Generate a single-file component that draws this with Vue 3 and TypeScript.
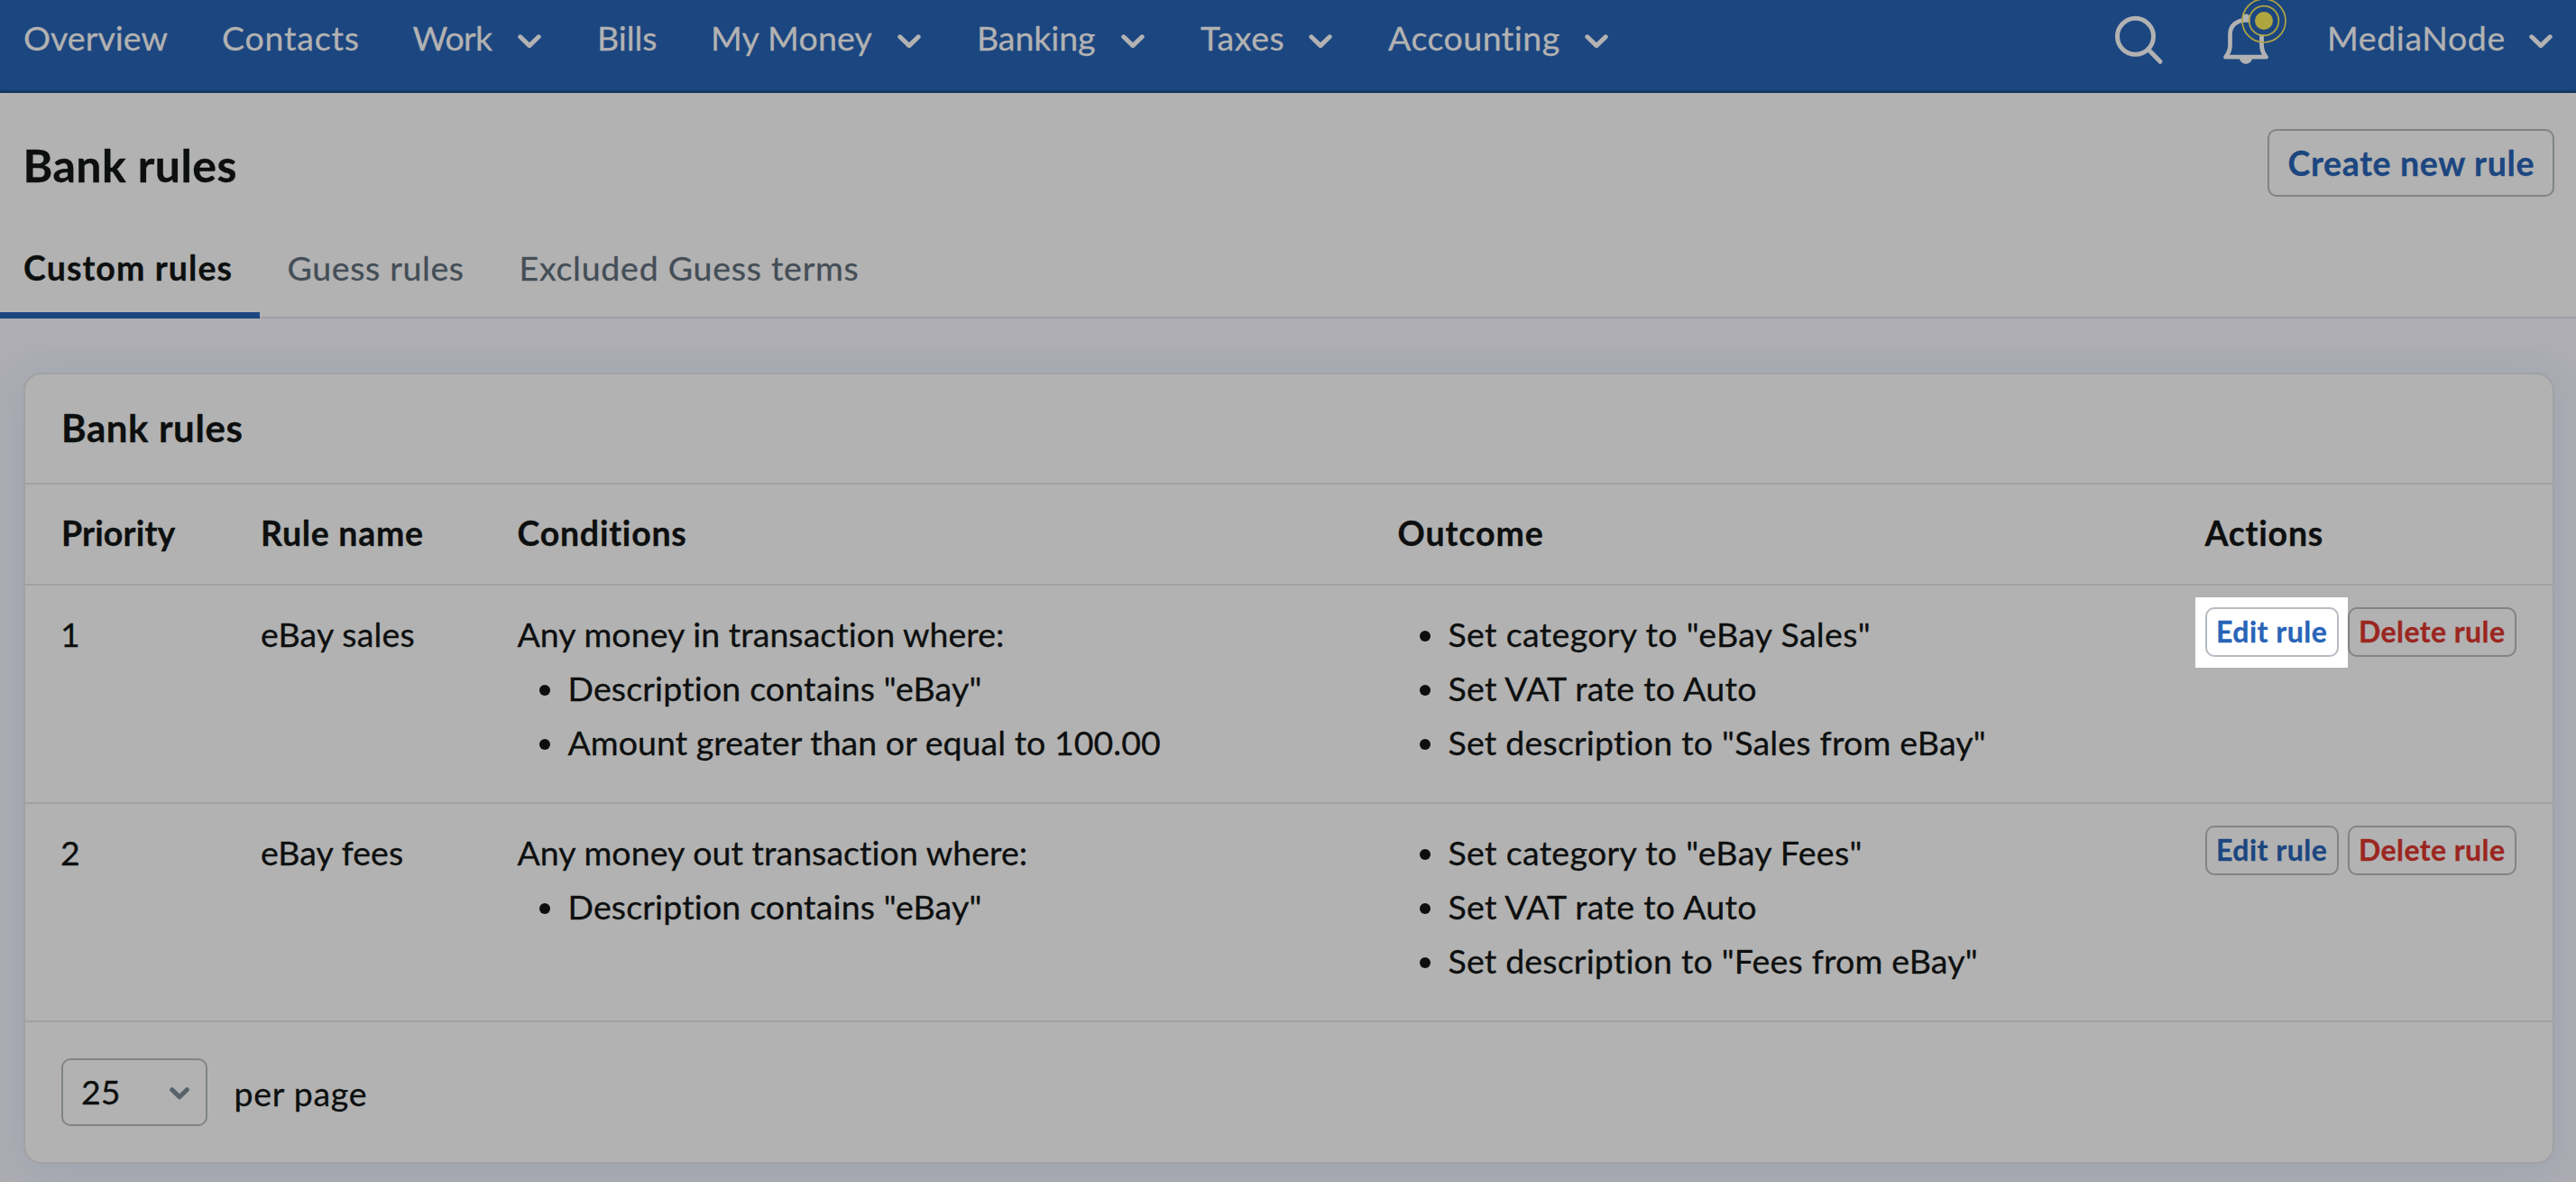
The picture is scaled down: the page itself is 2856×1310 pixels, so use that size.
<script setup lang="ts">
interface Label { text: string; ls?: number }
interface NavItem extends Label { menu?: boolean }
interface Rule {
  priority: number
  name: Label
  intro: Label
  conditions: Label[]
  outcomes: Label[]
  highlighted?: boolean
}

const nav: NavItem[] = [
  { text: 'Overview', ls: 0.05 },
  { text: 'Contacts', ls: 0.8 },
  { text: 'Work', ls: -0.7, menu: true },
  { text: 'Bills', ls: -0.1 },
  { text: 'My Money', ls: 0.2, menu: true },
  { text: 'Banking', ls: -0.08, menu: true },
  { text: 'Taxes', ls: 0.6, menu: true },
  { text: 'Accounting', ls: 0.5, menu: true },
]

const tabs: Label[] = [
  { text: 'Custom rules', ls: 1.1 },
  { text: 'Guess rules', ls: 0.63 },
  { text: 'Excluded Guess terms', ls: 0.74 },
]

const columns: Label[] = [
  { text: 'Priority', ls: 0.15 },
  { text: 'Rule name', ls: 0.68 },
  { text: 'Conditions', ls: 0.75 },
  { text: 'Outcome', ls: 0.93 },
  { text: 'Actions', ls: 0.75 },
]

const rules: Rule[] = [
  {
    priority: 1,
    name: { text: 'eBay sales', ls: 0.17 },
    intro: { text: 'Any money in transaction where:', ls: 0.05 },
    conditions: [
      { text: 'Description contains "eBay"', ls: 0.15 },
      { text: 'Amount greater than or equal to 100.00', ls: 0.03 },
    ],
    outcomes: [
      { text: 'Set category to "eBay Sales"', ls: 0.35 },
      { text: 'Set VAT rate to Auto', ls: 0.3 },
      { text: 'Set description to "Sales from eBay"', ls: 0.2 },
    ],
    highlighted: true,
  },
  {
    priority: 2,
    name: { text: 'eBay fees', ls: 0.05 },
    intro: { text: 'Any money out transaction where:', ls: 0.05 },
    conditions: [{ text: 'Description contains "eBay"', ls: 0.15 }],
    outcomes: [
      { text: 'Set category to "eBay Fees"', ls: 0.32 },
      { text: 'Set VAT rate to Auto', ls: 0.3 },
      { text: 'Set description to "Fees from eBay"', ls: 0.18 },
    ],
  },
]

const track = (l: Label) => ({ letterSpacing: `${l.ls ?? 0}px` })
</script>

<template>
  <div class="page">
    <header class="topbar">
      <nav class="menu">
        <a v-for="item in nav" :key="item.text" class="menu-item">
          <span :style="track(item)">{{ item.text }}</span>
          <svg v-if="item.menu" class="chevron" width="26" height="16" viewBox="0 0 26 16">
            <path d="M2.8 2.8 L13 12.6 L23.2 2.8" />
          </svg>
        </a>
      </nav>
      <div class="tools">
        <svg class="search" width="56" height="83" viewBox="0 0 56 83">
          <circle cx="24.5" cy="40.3" r="20" />
          <path d="M38.5 54.5 L52 68.3" />
        </svg>
        <svg class="bell" width="76" height="83" viewBox="0 0 76 83">
          <path class="bell-body" d="M28 22.3 C17 22.3 10.5 29 10.5 38 L10.5 50 C10.5 56 9 59 5.5 63.2 H50.5 C47 59 45.5 56 45.5 50 L45.5 38 C45.5 29 39 22.3 28 22.3 Z" />
          <path class="bell-fill" d="M24 24 V18.5 Q24 15.4 28 15.4 Q32 15.4 32 18.5 V24 Z M20.7 64 H35.3 C34.5 68.5 31.5 70.8 28 70.8 C24.5 70.8 21.5 68.5 20.7 64 Z" />
          <circle class="mask" cx="48" cy="23" r="15.5" />
          <circle class="ring" cx="48" cy="23" r="16.4" />
          <circle class="ring" cx="48" cy="23" r="24" />
          <circle class="dot" cx="48" cy="23" r="10" />
        </svg>
        <a class="account">
          <span>MediaNode</span>
          <svg class="chevron" width="26" height="16" viewBox="0 0 26 16">
            <path d="M2.8 2.8 L13 12.6 L23.2 2.8" />
          </svg>
        </a>
      </div>
    </header>

    <section class="heading">
      <h1>Bank rules</h1>
      <button class="create">Create new rule</button>
    </section>

    <div class="tabs">
      <a v-for="(tab, i) in tabs" :key="tab.text" class="tab" :class="{ active: i === 0 }">
        <span :style="track(tab)">{{ tab.text }}</span>
      </a>
    </div>

    <main class="body">
      <section class="card">
        <h2>Bank rules</h2>
        <div class="grid head">
          <div v-for="col in columns" :key="col.text" :style="track(col)">{{ col.text }}</div>
        </div>
        <div v-for="rule in rules" :key="rule.priority" class="grid row">
          <div class="priority">{{ rule.priority }}</div>
          <div :style="track(rule.name)">{{ rule.name.text }}</div>
          <div>
            <p :style="track(rule.intro)">{{ rule.intro.text }}</p>
            <ul>
              <li v-for="c in rule.conditions" :key="c.text" :style="track(c)">{{ c.text }}</li>
            </ul>
          </div>
          <ul>
            <li v-for="o in rule.outcomes" :key="o.text" :style="track(o)">{{ o.text }}</li>
          </ul>
          <div class="actions">
            <button class="small edit" :class="{ highlighted: rule.highlighted }">Edit rule</button>
            <button class="small delete">Delete rule</button>
          </div>
        </div>
        <footer class="pager">
          <div class="select">
            <span>25</span>
            <svg class="chevron" width="22" height="14" viewBox="0 0 22 14">
              <path d="M2.7 2.7 L11 10.8 L19.3 2.7" />
            </svg>
          </div>
          <span class="per-page">per page</span>
        </footer>
      </section>
    </main>
  </div>
</template>

<style>
body {
  margin: 0;
  background: #adadb3;
}
</style>

<style scoped>
.page {
  width: 2856px;
  height: 1310px;
  display: flex;
  flex-direction: column;
  overflow: hidden;
  box-sizing: border-box;
  font-family: Lato, "Liberation Sans", sans-serif;
  font-size: 37.5px;
  line-height: 60px;
  color: #0d0f0f;
  white-space: nowrap;
  -webkit-text-stroke: 0.3px currentColor;
}
.page * {
  box-sizing: border-box;
}
h1, h2, p, ul {
  margin: 0;
  padding: 0;
}
.topbar {
  flex: none;
  height: 103px;
  display: flex;
  justify-content: space-between;
  background: #1c4680;
  box-shadow: inset 0 -3px 1px -0.5px #14335f;
  color: #b2b2b2;
  line-height: 84px;
}
.menu {
  display: grid;
  grid-template-columns: 220px 211.5px 204.5px 126px 295px 248px 208px 306.5px;
  padding-left: 26px;
}
.menu-item {
  display: flex;
  justify-content: space-between;
  padding-right: 62.5px;
}
.chevron {
  flex: none;
  margin-top: 37.5px;
  fill: none;
  stroke: #b2b2b2;
  stroke-width: 5;
  stroke-linecap: round;
  stroke-linejoin: round;
}
.tools {
  display: flex;
  padding-right: 26px;
}
.search {
  fill: none;
  stroke: #b2b2b2;
  stroke-width: 5;
  stroke-linecap: round;
  margin-right: 63px;
}
.bell {
  margin-right: 42px;
}
.bell-body {
  fill: none;
  stroke: #b2b2b2;
  stroke-width: 4.8;
  stroke-linejoin: round;
}
.bell-fill {
  fill: #b2b2b2;
}
.mask {
  fill: #1c4680;
}
.ring {
  fill: none;
  stroke: #b0a640;
  stroke-width: 1.7;
}
.dot {
  fill: #b0a640;
}
.account {
  display: flex;
  justify-content: space-between;
  width: 250px;
  letter-spacing: 0.6px;
}
.heading {
  flex: none;
  height: 140px;
  display: flex;
  justify-content: space-between;
  align-items: flex-start;
  padding: 40px 24px 0 25.5px;
  background: #b2b2b2;
}
h1 {
  font-size: 50px;
  font-weight: 700;
  line-height: 80px;
  letter-spacing: 0.45px;
}
button {
  font-family: inherit;
  font-weight: 700;
  background: transparent;
  border: 2px solid #7f8487;
  border-radius: 10px;
  color: #1c4680;
  text-align: left;
  white-space: nowrap;
}
.create {
  width: 318px;
  height: 75px;
  padding: 0 0 1px 20.5px;
  font-size: 37.5px;
  letter-spacing: 0.66px;
}
.tabs {
  flex: none;
  height: 110px;
  display: grid;
  grid-template-columns: 288px 257px auto;
  background: #b2b2b2;
  border-bottom: 2px solid #a0a1a5;
  line-height: 108px;
  color: #444e57;
}
.tab {
  height: 110px;
  padding-left: 30.5px;
}
.tab.active {
  padding-left: 26px;
  font-weight: 700;
  color: #0d0f0f;
  border-bottom: 7px solid #1c4680;
}
.body {
  flex: 1;
  padding: 60px 24px 0 26px;
  background: #adadb3;
}
.card {
  height: 877px;
  background: #b2b2b2;
  border: 2px solid #a1a1a6;
  border-radius: 20px;
  box-shadow: 0 8px 40px rgba(90, 125, 160, 0.2);
}
h2 {
  height: 122px;
  padding-left: 40px;
  border-bottom: 2px solid #a0a0a5;
  font-size: 42px;
  font-weight: 700;
  line-height: 119.5px;
  letter-spacing: 0.58px;
}
.grid {
  display: grid;
  grid-template-columns: 221px 284.5px 976px 895px auto;
  padding: 24px 0 0 40px;
  border-bottom: 2px solid #a0a0a5;
}
.head {
  height: 112px;
  font-weight: 700;
}
.row {
  height: 242px;
}
.priority {
  margin-left: -1px;
}
ul {
  list-style: none;
  padding-left: 56px;
}
li {
  display: flex;
  align-items: center;
}
li::before {
  content: "";
  width: 12px;
  height: 12px;
  margin-left: -31.5px;
  margin-right: 19.5px;
  border-radius: 50%;
  background: #0d0f0f;
  transform: translateY(2px);
}
.actions {
  display: flex;
  gap: 10px;
}
.small {
  height: 55px;
  padding: 0 0 2px 10.5px;
  font-size: 32px;
}
.edit {
  position: relative;
  width: 148px;
  letter-spacing: 0.5px;
}
.edit.highlighted {
  z-index: 0;
  color: #2864b8;
  border-color: #b5bbc1;
}
.edit.highlighted::before {
  content: "";
  position: absolute;
  z-index: -1;
  inset: -13px -12px -14px -13px;
  background: #fff;
}
.edit.highlighted::after {
  content: "";
  position: absolute;
  inset: -2px;
  border: 2px solid #b5bbc1;
  border-radius: 10px;
}
.delete {
  width: 187px;
  letter-spacing: 0.43px;
  color: #9b2620;
}
.pager {
  display: flex;
  padding: 40px 0 0 40px;
  line-height: 78px;
}
.select {
  display: flex;
  justify-content: space-between;
  width: 162px;
  height: 75px;
  padding: 0 18px 0 20px;
  border: 2px solid #7f8487;
  border-radius: 10px;
  line-height: 70px;
}
.select .chevron {
  margin-top: 30px;
  stroke: #57626a;
}
.per-page {
  margin-left: 29.5px;
  letter-spacing: 0.73px;
}
</style>
